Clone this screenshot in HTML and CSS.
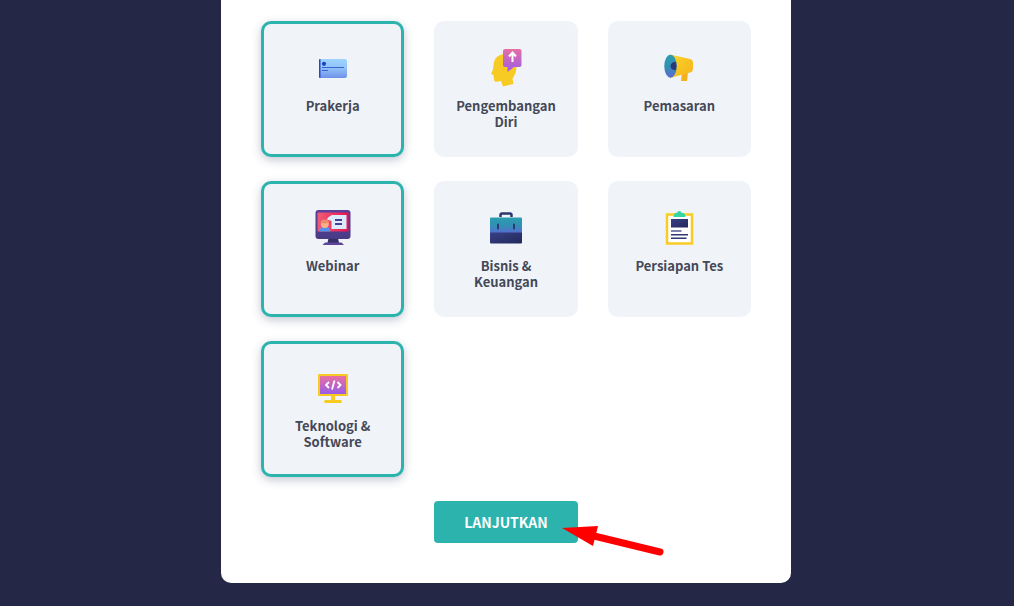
FILE: index.html
```html
<!DOCTYPE html>
<html lang="id">
<head>
    <meta charset="UTF-8">
    <meta name="viewport" content="width=device-width, initial-scale=1.0">
    <title>Pilih Kategori</title>
    <link rel="stylesheet" href="styles.css">
</head>
<body>
    <main class="panel">
        <div class="categories">
            <button type="button" class="category selected" aria-pressed="true">
                <svg class="icon" viewBox="0 0 40 40" aria-hidden="true">
                    <defs>
                        <linearGradient id="cardBlue" x1="0" y1="0" x2="0" y2="1">
                            <stop offset="0" stop-color="#9dd4ff"/>
                            <stop offset=".45" stop-color="#93c4fa"/>
                            <stop offset="1" stop-color="#6f92ea"/>
                        </linearGradient>
                    </defs>
                    <rect x="6" y="11" width="28" height="19" rx="2" fill="url(#cardBlue)"/>
                    <path d="M7.500 11H7a1 1 0 0 0-1 1v17a1 1 0 0 0 1 1h.5z" fill="#2348c8"/>
                    <circle cx="11" cy="15.800" r="2.100" fill="#2040cc"/>
                    <path d="M9 19.500h22M9 22.500h6" stroke="#3b63d0" stroke-width="1"/>
                </svg>
                <span>Prakerja</span>
            </button>
            <button type="button" class="category" aria-pressed="false">
                <svg class="icon" viewBox="0 0 40 40" aria-hidden="true">
                    <defs>
                        <linearGradient id="pinkPurple" x1="0" y1="0" x2="0" y2="1">
                            <stop offset="0" stop-color="#e86fa4"/>
                            <stop offset="1" stop-color="#9b5ce8"/>
                        </linearGradient>
                    </defs>
                    <path d="M19 6C12 6 7.500 11 7.500 17.500L7 21.500 5 26l2.500 1 .5 4.500c.2 2 1.500 2.500 3 2.200l4-.7 2 5.500 10.500-2.500-1-5.500c2.500-3.500 4-7 4-12L29 12 21 6z" fill="#f8ca24"/>
                    <path d="M19 1h14.500q2 0 2 2v14q0 2-2 2H28l-6.500 5V19H19q-2 0-2-2V3q0-2 2-2z" fill="url(#pinkPurple)"/>
                    <path d="M26.500 14V5M23 8.500l3.500-4 3.500 4" fill="none" stroke="#fff" stroke-width="2"/>
                </svg>
                <span>Pengembangan Diri</span>
            </button>
            <button type="button" class="category" aria-pressed="false">
                <svg class="icon" viewBox="0 0 40 40" aria-hidden="true">
                    <defs>
                        <linearGradient id="horn" x1="0" y1="0" x2="1" y2="1">
                            <stop offset="0" stop-color="#fbd528"/>
                            <stop offset="1" stop-color="#f5b21c"/>
                        </linearGradient>
                        <linearGradient id="tealBlue" x1="0" y1="0" x2="0" y2="1">
                            <stop offset="0" stop-color="#2a9db0"/>
                            <stop offset=".5" stop-color="#3190b4"/>
                            <stop offset="1" stop-color="#5a6bd4"/>
                        </linearGradient>
                    </defs>
                    <path d="M23 24h6l-1 9h-6z" fill="#f5b01f"/>
                    <path d="M11 6.500L31 11q3 .5 3 4v5q0 4-3 4.500L11 30z" fill="url(#horn)"/>
                    <ellipse cx="11.500" cy="18.200" rx="6.200" ry="11.500" fill="url(#tealBlue)"/>
                    <path d="M17 14.300a4 4 0 1 0 0 7.400q1-3.500 0-7.400z" fill="#2c3978"/>
                </svg>
                <span>Pemasaran</span>
            </button>
            <button type="button" class="category selected" aria-pressed="true">
                <svg class="icon" viewBox="0 0 40 40" aria-hidden="true">
                    <defs>
                        <linearGradient id="monitor" x1="0" y1="0" x2="0" y2="1">
                            <stop offset="0" stop-color="#5d3f9c"/>
                            <stop offset="1" stop-color="#493b86"/>
                        </linearGradient>
                        <linearGradient id="redScreen" x1="0" y1="0" x2="1" y2="0">
                            <stop offset="0" stop-color="#ee5d75"/>
                            <stop offset="1" stop-color="#e9134f"/>
                        </linearGradient>
                    </defs>
                    <path d="M15.500 30h9.500l1 5H14.500z" fill="#352e68"/>
                    <path d="M12 34.500h16.500L31 37H9.500z" fill="#5c4599"/>
                    <rect x="2.500" y="2" width="35" height="29" rx="3" fill="url(#monitor)"/>
                    <rect x="4.500" y="4.500" width="31" height="19" rx="1" fill="url(#redScreen)"/>
                    <path d="M19 7h14.500v14H18.500v-8L14 11.500q0-2 5-4.500z" fill="#dceaff"/>
                    <path d="M22 12h7M22 16h7" stroke="#4a3d8b" stroke-width="2"/>
                    <path d="M6.500 23.500q.5-5 5.500-5t5.500 5z" fill="#4f94f2"/>
                    <circle cx="11.800" cy="16" r="4" fill="#fbb18e"/>
                    <path d="M7.800 15q0-3.500 4-3.500t4 3q-4 1.500-8 .5z" fill="#f08b68"/>
                </svg>
                <span>Webinar</span>
            </button>
            <button type="button" class="category" aria-pressed="false">
                <svg class="icon" viewBox="0 0 40 40" aria-hidden="true">
                    <defs>
                        <linearGradient id="navy" x1="0" y1="0" x2="1" y2="1">
                            <stop offset="0" stop-color="#374086"/>
                            <stop offset="1" stop-color="#23295a"/>
                        </linearGradient>
                    </defs>
                    <path d="M14.500 9V7q0-1.500 1.500-1.500h8q1.500 0 1.500 1.500v2" fill="none" stroke="#2d366f" stroke-width="2.500"/>
                    <rect x="4" y="9.500" width="32" height="16" rx="1" fill="url(#tealBlue)"/>
                    <path d="M4 24.500h32v10q0 1-1 1H5q-1 0-1-1z" fill="url(#navy)"/>
                    <path d="M12 16.500v4M28 16.500v4" stroke="#2d3975" stroke-width="2" stroke-linecap="round"/>
                </svg>
                <span>Bisnis &amp; Keuangan</span>
            </button>
            <button type="button" class="category" aria-pressed="false">
                <svg class="icon" viewBox="0 0 40 40" aria-hidden="true">
                    <rect x="8" y="6.500" width="25" height="29" fill="#fff" stroke="#f8cb25" stroke-width="2.500"/>
                    <path d="M14.500 9q0-4 3.500-4.200Q18.500 3 20.300 3t2.300 1.800Q26.500 5 26.500 9z" fill="#35d6a3"/>
                    <rect x="12" y="11" width="17" height="8.500" fill="url(#navy)"/>
                    <path d="M12 23h10.500" stroke="#545b93" stroke-width="1.500"/>
                    <path d="M12 26.800h17M12 30.300h15.500" stroke="#303875" stroke-width="1.500"/>
                </svg>
                <span>Persiapan Tes</span>
            </button>
            <button type="button" class="category selected" aria-pressed="true">
                <svg class="icon" viewBox="0 0 40 40" aria-hidden="true">
                    <path d="M18 27h4v5h5.500a1.500 1.500 0 0 1 0 3h-15a1.500 1.500 0 0 1 0-3H18z" fill="#f8ca24"/>
                    <rect x="5" y="6" width="30" height="22" rx="1" fill="#f8ca24"/>
                    <rect x="7" y="8" width="26" height="18" fill="url(#pinkPurple)"/>
                    <path d="M16 14l-3 3 3 3M24.500 14l3 3-3 3M21.500 12.500l-2.500 9" fill="none" stroke="#fff" stroke-width="1.800"/>
                </svg>
                <span>Teknologi &amp; Software</span>
            </button>
            <div class="next">
                <button type="button" class="nextButton">LANJUTKAN</button>
                <svg class="arrow" viewBox="0 0 104 32" aria-hidden="true">
                    <path d="M28 9l70 17" stroke="#f00" stroke-width="7" stroke-linecap="round"/>
                    <path d="M0 2L36 0l-5 20z" fill="#f00"/>
                </svg>
            </div>
        </div>
    </main>
</body>
</html>
```
FILE: styles.css
```css
:root{
    --background: #242745;
    --cardBackground: #f0f4f9;
    --accent: #2cb3ad;
    --fontColor: #444857;
}
*{
    box-sizing: border-box;
}
body{
    margin: 0;
    padding: 0 18px 23px 16px;
    background: var(--background);
    font-family: "Noto Sans CJK SC", "Open Sans", sans-serif;
}
.panel{
    max-width: 570px;
    margin: 0 auto;
    padding: 21px 40px 40px;
    background: #fff;
    border-radius: 0 0 10px 10px;
}
.categories{
    display: grid;
    grid-template-columns: repeat(3, 1fr);
    gap: 24px 30px;
}
button{
    font-family: inherit;
    font-weight: 700;
    cursor: pointer;
}
.category{
    display: flex;
    flex-direction: column;
    align-items: center;
    gap: 10px;
    min-height: 136px;
    padding: 24px 16px;
    border: 3px solid var(--cardBackground);
    border-radius: 10px;
    background: var(--cardBackground);
    color: var(--fontColor);
    font-size: 13px;
    line-height: 16px;
    text-align: center;
}
.selected{
    border-color: var(--accent);
    box-shadow: 0 3px 10px rgba(50, 70, 110, 0.3);
}
.icon{
    width: 40px;
    height: 40px;
    flex-shrink: 0;
}
/* own row, as wide as one column */
.next{
    grid-column: 1 / -1;
    justify-self: center;
    width: calc((100% - 60px) / 3);
    position: relative;
}
.nextButton{
    display: block;
    width: 100%;
    padding: 11px 0;
    border: 0;
    border-radius: 4px;
    background: var(--accent);
    color: #fff;
    font-size: 14px;
    line-height: 20px;
}
.arrow{
    position: absolute;
    top: 25px;
    left: 128px;
    width: 104px;
    height: 32px;
    pointer-events: none;
}
```
